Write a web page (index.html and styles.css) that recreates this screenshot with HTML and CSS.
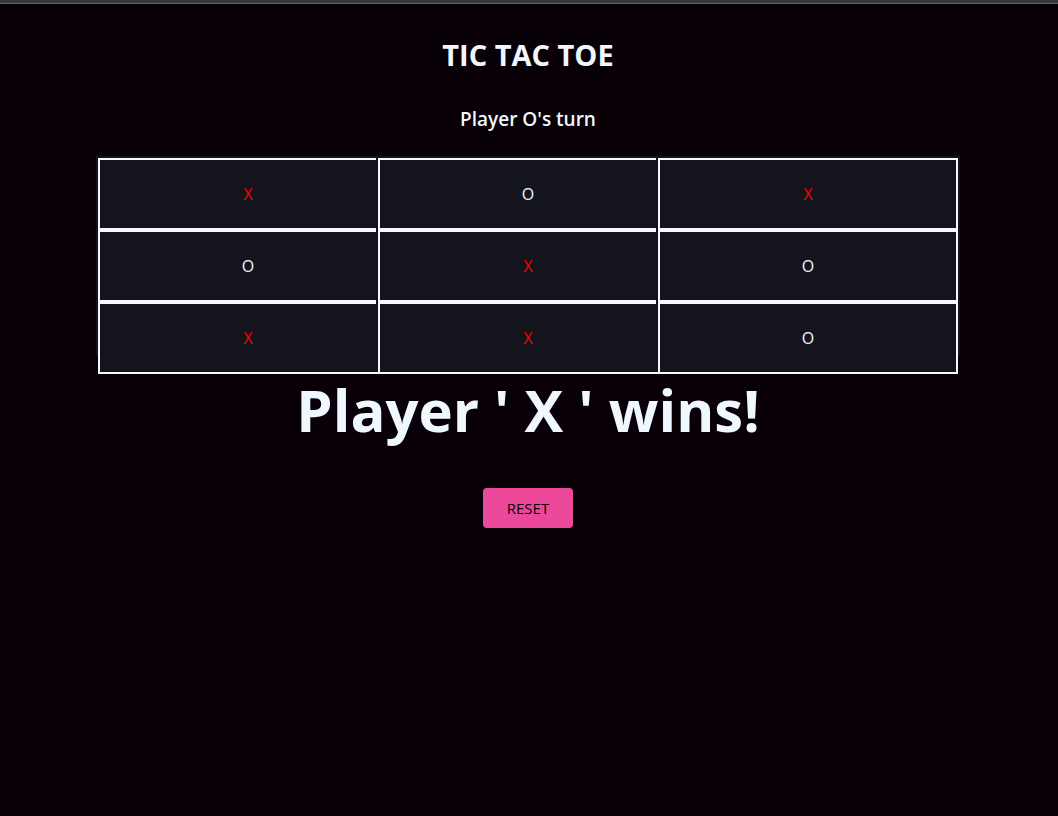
FILE: index.html
```html
<!DOCTYPE html>
<html lang="en">
<head>
<meta charset="utf-8">
<title>Tic Tac Toe</title>
<link rel="stylesheet" href="styles.css">
</head>
<body>
<main class="game">
  <h1 class="title">TIC TAC TOE</h1>
  <h2 class="turn">Player O's turn</h2>
  <div class="board">
    <div class="column">
      <button class="cell x" type="button">X</button>
      <button class="cell" type="button">O</button>
      <button class="cell x" type="button">X</button>
    </div>
    <div class="column">
      <button class="cell" type="button">O</button>
      <button class="cell x" type="button">X</button>
      <button class="cell x" type="button">X</button>
    </div>
    <div class="column">
      <button class="cell x" type="button">X</button>
      <button class="cell" type="button">O</button>
      <button class="cell" type="button">O</button>
    </div>
  </div>
  <p class="result">Player ' X ' wins!</p>
  <button class="reset" type="button">RESET</button>
</main>
</body>
</html>
```
FILE: styles.css
```css
* {
  box-sizing: border-box;
}

body {
  margin: 0;
  min-height: 100vh;
  background: #080006;
  color: #f0f8ff;
  font-family: "Segoe UI", "Open Sans", "Noto Sans", sans-serif;
  border-top: 3px solid #383838;
}

.game {
  display: flex;
  flex-direction: column;
  align-items: center;
  padding: 31px 98px 0 96px;
  border-top: 1px solid #6b6666;
}

.title {
  margin: 0;
  font-size: 29px;
  line-height: 40px;
  font-weight: 700;
}

.turn {
  margin: 29px 0 22px;
  font-size: 19px;
  line-height: 30px;
  font-weight: 600;
}

.board {
  display: grid;
  grid-template-columns: repeat(3, 1fr);
  width: 100%;
  padding-right: 24px;
  margin-bottom: 16px;
}

/* Each column runs under the next one, which hides its right border. */
.column {
  height: 200px;
  margin-right: -24px;
  padding: 2px;
  background: #14141c;
}

.cell {
  display: block;
  width: 100%;
  height: 72px;
  padding: 0;
  border: 2px solid #f8f8ff;
  background: #14141c;
  color: #f0f8ff;
  font: inherit;
  font-size: 16px;
}

.cell.x {
  color: #ff0000;
}

.result {
  margin: 0;
  font-size: 58px;
  line-height: 76px;
  font-weight: 700;
}

.reset {
  margin-top: 40px;
  padding: 0 24px;
  height: 40px;
  border: 0;
  border-radius: 4px;
  background: #ec4899;
  color: #080006;
  font: inherit;
  font-size: 15px;
}
```
